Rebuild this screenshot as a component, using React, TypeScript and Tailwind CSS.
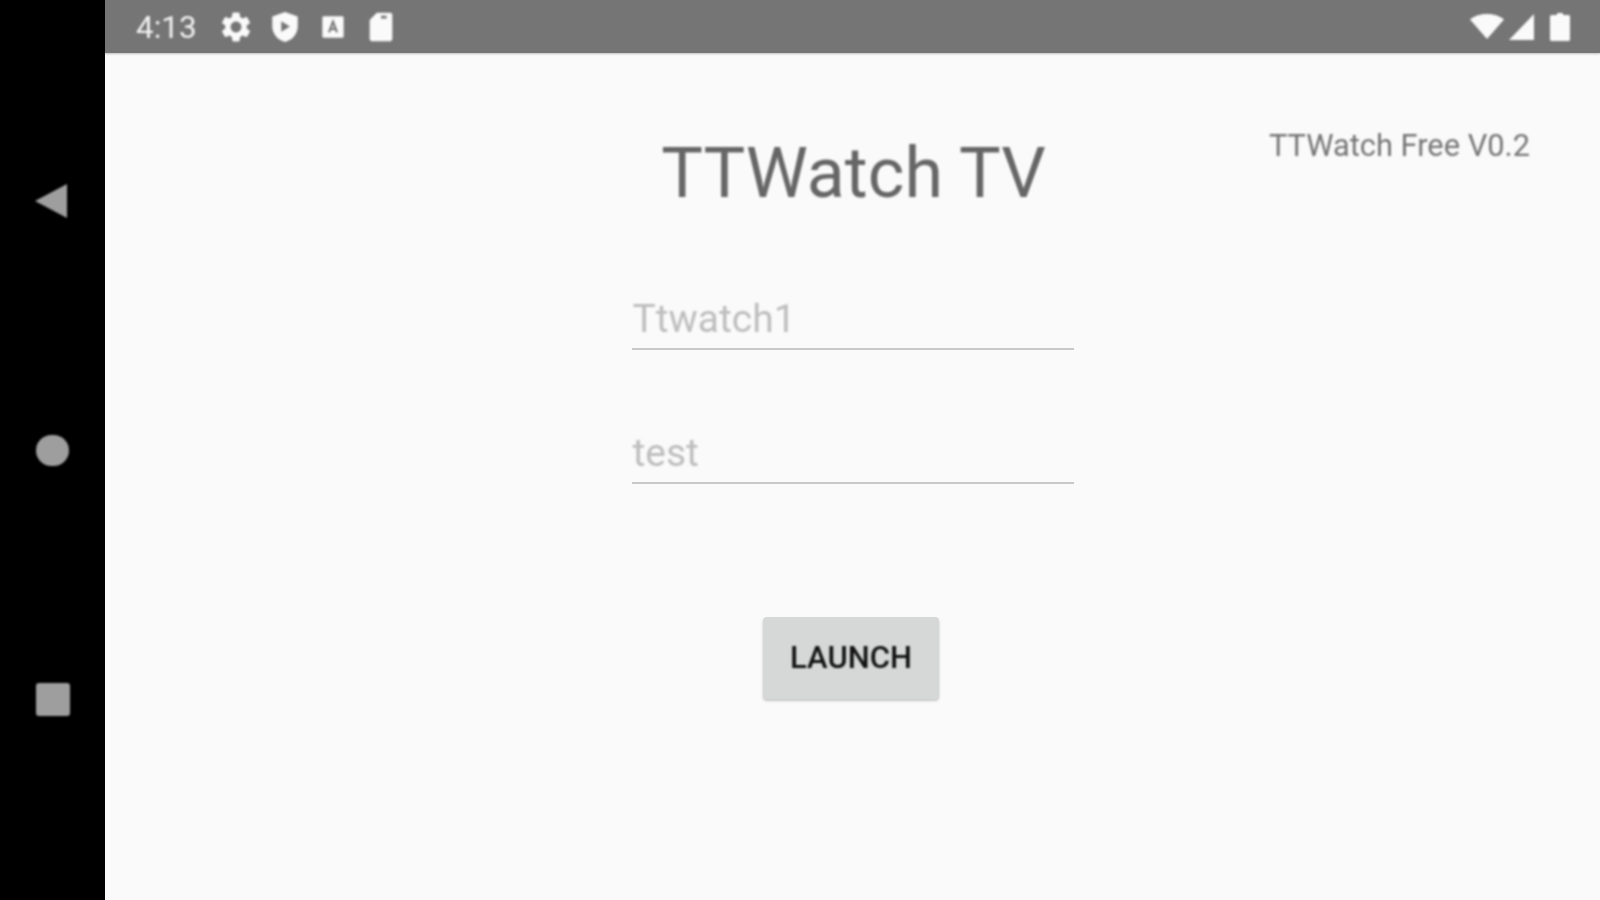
import React from 'react';

function StatusBar() {
  return (
    <div className="h-[53px] shrink-0 bg-[#757575] flex items-center justify-between pl-[31px] pr-[30px] shadow-[0_1px_2px_rgba(0,0,0,0.25)]">
      <div className="flex items-center text-[#f2f2f2]">
        <span className="text-[31.5px] leading-none w-[61px] mr-[21px] mt-[2px] blur-[0.9px]">4:13</span>
        <svg className="w-[36px] h-[36px] mr-[13px] blur-[0.9px]" viewBox="0 0 24 24" fill="#fafafa">
          <path d="M19.14 12.94c.04-.3.06-.61.06-.94 0-.32-.02-.64-.07-.94l2.03-1.58a.49.49 0 0 0 .12-.61l-1.92-3.32a.488.488 0 0 0-.59-.22l-2.39.96c-.5-.38-1.03-.7-1.62-.94l-.36-2.54a.484.484 0 0 0-.48-.41h-3.84c-.24 0-.43.17-.47.41l-.36 2.54c-.59.24-1.13.57-1.62.94l-2.39-.96c-.22-.08-.47 0-.59.22L2.74 8.87c-.12.21-.08.47.12.61l2.03 1.58c-.05.3-.09.63-.09.94s.02.64.07.94l-2.03 1.58a.49.49 0 0 0-.12.61l1.92 3.32c.12.22.37.29.59.22l2.39-.96c.5.38 1.03.7 1.62.94l.36 2.54c.05.24.24.41.48.41h3.84c.24 0 .44-.17.47-.41l.36-2.54c.59-.24 1.13-.56 1.62-.94l2.39.96c.22.08.47 0 .59-.22l1.92-3.32c.12-.22.07-.47-.12-.61l-2.01-1.58zM12 15.6c-1.98 0-3.6-1.62-3.6-3.6s1.62-3.6 3.6-3.6 3.6 1.62 3.6 3.6-1.62 3.6-3.6 3.6z" />
        </svg>
        <svg className="w-[36px] h-[36px] mr-[14px] blur-[0.9px]" viewBox="0 0 24 24">
          <path fill="#fafafa" d="M12 2 3.5 5v6.5c0 5 3.6 9.3 8.5 10.5 4.900-1.200 8.500-5.500 8.500-10.500V5L12 2z" />
          <path fill="#757575" d="M9.500 8.200v7l5.800-3.500z" />
        </svg>
        <svg className="w-[32px] h-[32px] mr-[15px] blur-[0.9px]" viewBox="0 0 24 24">
          <rect x="4" y="4" width="16" height="16" rx="1" fill="#fafafa" />
          <path fill="none" stroke="#757575" strokeWidth="1.6" d="M9 16l3-8 3 8M10 13.500h4" />
        </svg>
        <svg className="w-[34px] h-[34px] blur-[0.9px]" viewBox="0 0 24 24" fill="#fafafa">
          <path d="M9 2 4 7v13.500A1.500 1.500 0 0 0 5.500 22h13a1.500 1.500 0 0 0 1.500-1.500v-17A1.500 1.500 0 0 0 18.500 2H9zM12 4h4v2h-4z" fillRule="evenodd" />
        </svg>
      </div>
      <div className="flex items-center">
        <svg className="w-[38px] h-[32px] mr-[1px] mb-[2px] blur-[0.9px]" viewBox="0 0 38 32" fill="#fafafa">
          <path d="M2 9.500C7 5.500 12.500 4 19 4s12 1.500 17 5.500L19 29z" />
        </svg>
        <svg className="w-[30px] h-[30px] mr-[13px] blur-[0.9px]" viewBox="0 0 30 30" fill="#fafafa">
          <path d="M27 2v26H2z" />
        </svg>
        <svg className="w-[20px] h-[32px] blur-[0.9px]" viewBox="0 0 20 32" fill="#fafafa">
          <path d="M7 2h6v2h5.500A1.500 1.500 0 0 1 20 5.500v23a1.500 1.500 0 0 1-1.500 1.500h-17A1.500 1.500 0 0 1 0 28.500v-23A1.500 1.500 0 0 1 1.500 4H7z" />
        </svg>
      </div>
    </div>
  );
}

function NavRail() {
  return (
    <div className="w-[105px] shrink-0 bg-black h-full pt-[183px] pl-[34px] flex flex-col">
      <svg className="w-[34px] h-[36px] blur-[0.9px]" viewBox="0 0 34 36" fill="#9e9e9e">
        <path d="M33 1v34L1 18z" />
      </svg>
      <div className="w-[33px] h-[31px] rounded-full bg-[#9e9e9e] mt-[216px] ml-[2px] blur-[0.9px]" />
      <div className="w-[34px] h-[33px] rounded-[3px] bg-[#9e9e9e] mt-[217px] ml-[2px] blur-[0.9px]" />
    </div>
  );
}

function Field({ value }: { value: string }) {
  return (
    <div className="w-[442px] h-[60px] border-b-2 border-[#c8c8c8] flex items-end pb-[6px] pl-[1px]">
      <span className="text-[39px] leading-[46px] text-[#bdbdbd] blur-[0.9px]">{value}</span>
    </div>
  );
}

export default function App() {
  return (
    <div
      className="flex h-[900px] w-[1600px] overflow-hidden bg-[#fafafa]"
      style={{ fontFamily: 'Roboto, sans-serif' }}
    >
      <NavRail />
      <div className="flex-1 flex flex-col">
        <StatusBar />
        <div className="grid grid-cols-[1fr_auto_1fr] pt-[80px]">
          <div />
          <h1 className="text-[70px] leading-[80px] text-[#666666] ml-[2px] blur-[0.9px]">TTWatch TV</h1>
          <p className="text-right text-[30.8px] leading-[36px] text-[#757575] mt-[-5px] pr-[70px] blur-[0.9px]">TTWatch Free V0.2</p>
        </div>
        <div className="flex flex-col items-center">
          <div className="mt-[77px]">
            <Field value="Ttwatch1" />
          </div>
          <div className="mt-[74px]">
            <Field value="test" />
          </div>
          <button className="mt-[133px] mr-[3px] w-[176px] h-[82px] rounded-[4px] bg-[#d6d7d7] shadow-[0_2px_3px_rgba(0,0,0,0.2)] text-[31px] font-medium text-[#111111]">
            <span className="blur-[0.9px] inline-block">LAUNCH</span>
          </button>
        </div>
      </div>
    </div>
  );
}
